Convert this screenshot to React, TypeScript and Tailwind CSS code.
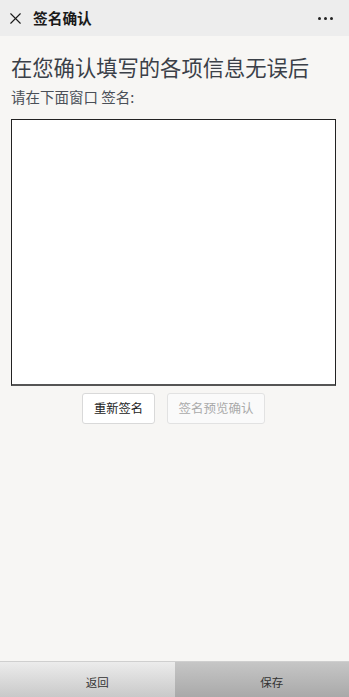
import { X } from "lucide-react";

export default function App() {
  return (
    <div
      className="flex h-[697px] w-[349px] flex-col overflow-hidden bg-[#f7f6f4]"
      style={{ fontFamily: '"Noto Sans CJK SC", "Noto Sans", sans-serif' }}
    >
      {/* Top bar */}
      <div className="flex h-[36px] shrink-0 items-center bg-[#ededed] pl-[6px] pr-[16px]">
        <X className="h-[19px] w-[19px] text-[#1a1a1a]" strokeWidth={1.4} aria-hidden="true" />
        <span className="ml-[8px] text-[14.7px] font-bold leading-none text-[#1a1a1a]">
          签名确认
        </span>
        <div className="ml-auto flex items-center gap-[3px]">
          <span className="h-[3px] w-[3px] rounded-full bg-[#222]" />
          <span className="h-[3px] w-[3px] rounded-full bg-[#222]" />
          <span className="h-[3px] w-[3px] rounded-full bg-[#222]" />
        </div>
      </div>

      {/* Content */}
      <div className="flex flex-1 flex-col pl-[11px] pr-[13px]">
        <h1 className="mt-[18px] text-[21.3px] leading-[26px] font-normal whitespace-nowrap text-[#3b4048]">
          在您确认填写的各项信息无误后
        </h1>
        <p className="mt-[7px] text-[14.5px] leading-[20px] text-[#4a4f57]">
          请在下面窗口 签名:
        </p>
        <div className="mt-[12px] h-[267px] w-full border border-[#222] border-b-[2px] border-b-[#555] bg-white" />
        <div className="mt-[7px] flex justify-center gap-[12px]">
          <button className="h-[31px] w-[73px] rounded-[3px] border border-[#d9d9d9] bg-white text-[12.3px] text-[#222]">
            重新签名
          </button>
          <button className="h-[31px] w-[98px] rounded-[3px] border border-[#e2e2e2] bg-[#fafafa] text-[12.5px] text-[#aaa]">
            签名预览确认
          </button>
        </div>
      </div>

      {/* Bottom bar */}
      <div className="flex h-[36px] shrink-0 border-t border-[#cfcfcf]">
        <button className="flex flex-1 items-center justify-center bg-gradient-to-b from-[#ececec] to-[#c9c9c9] pt-[6px] pl-[20px] text-[11.5px] text-[#333]">
          返回
        </button>
        <button className="flex flex-1 items-center justify-center bg-gradient-to-b from-[#c6c6c6] to-[#a9a9a9] pt-[6px] pl-[20px] text-[11.5px] text-[#333]">
          保存
        </button>
      </div>
    </div>
  );
}
